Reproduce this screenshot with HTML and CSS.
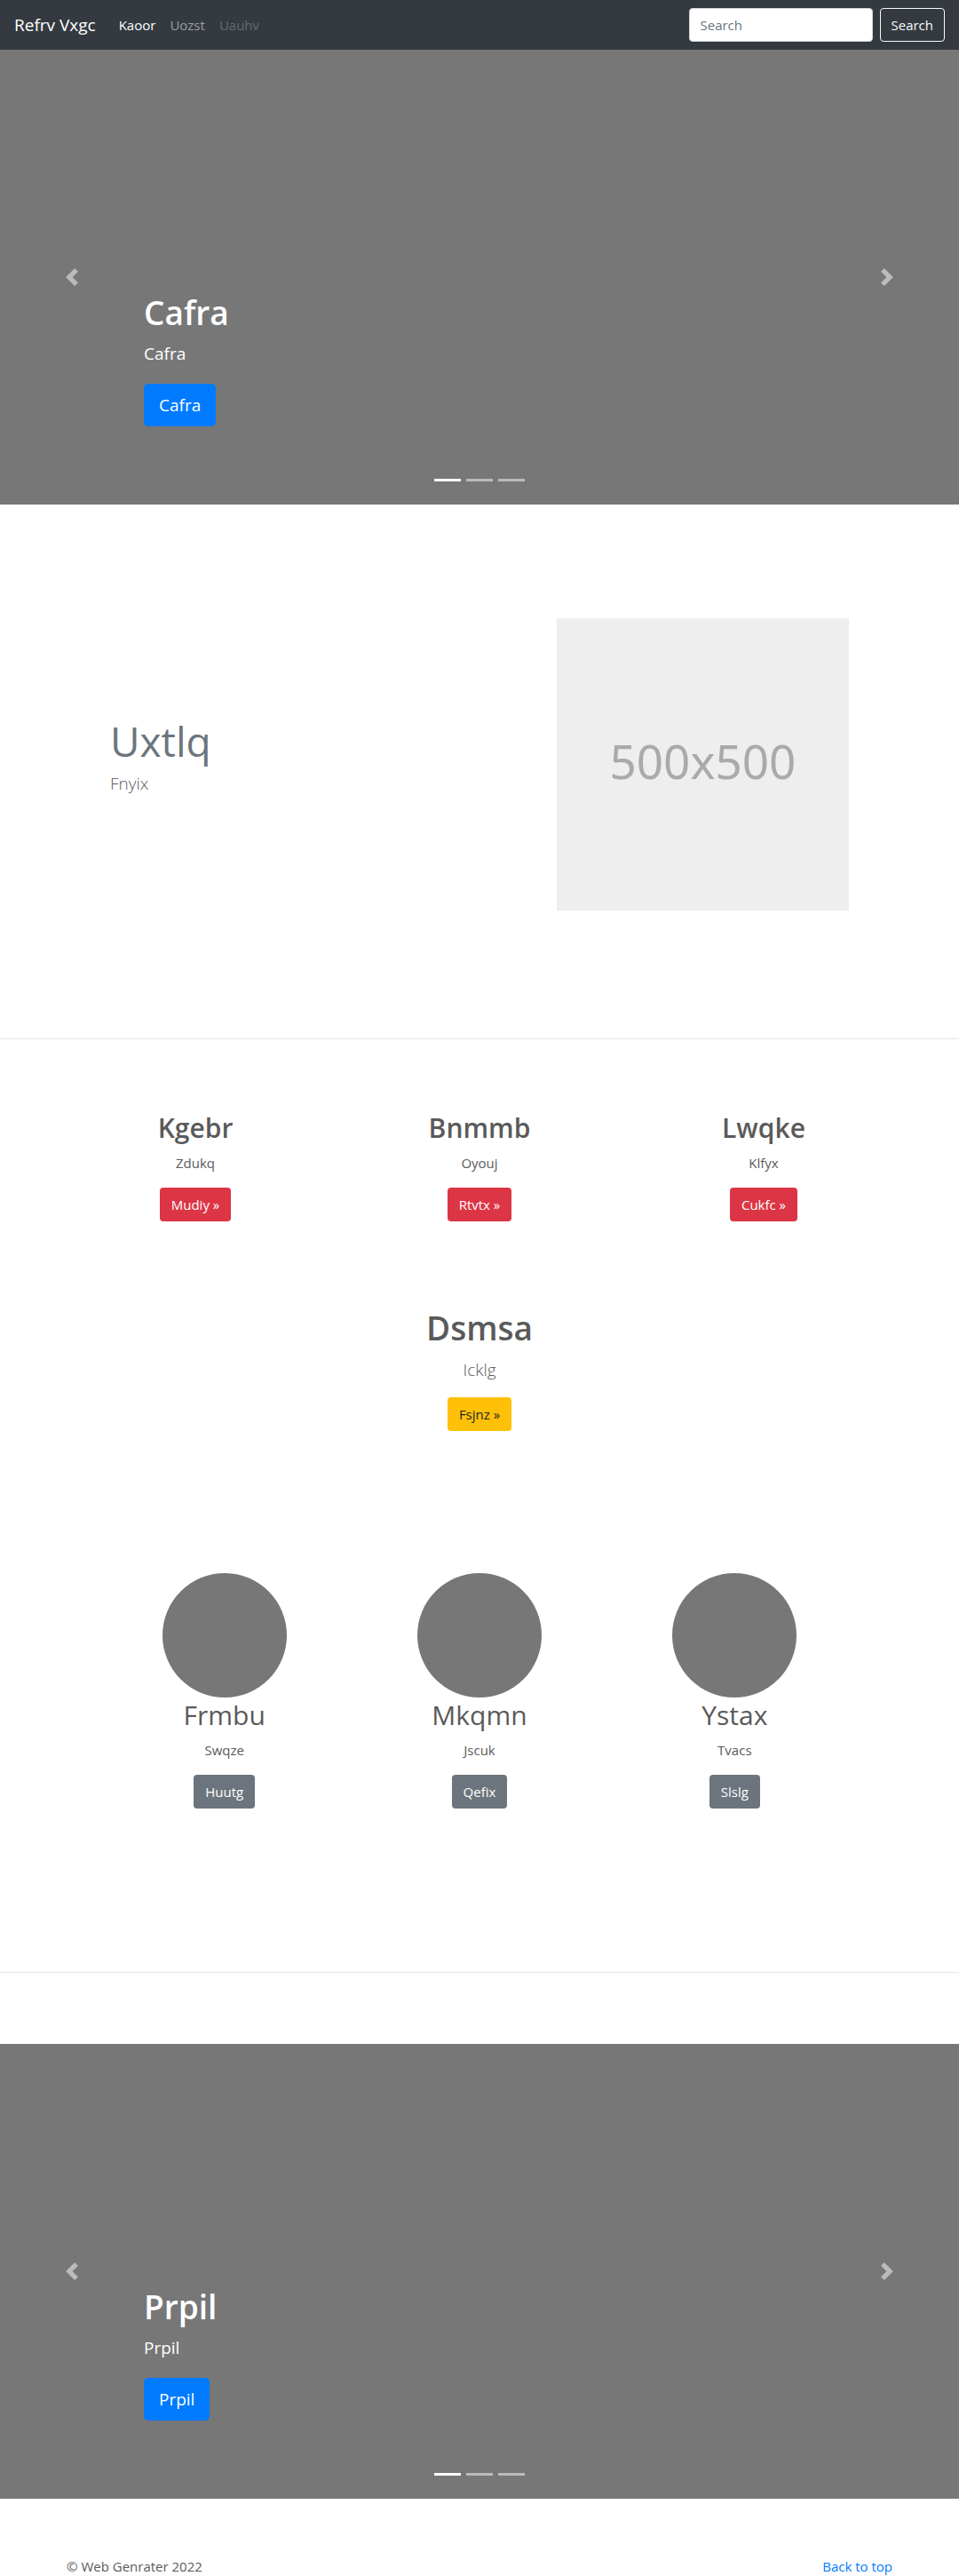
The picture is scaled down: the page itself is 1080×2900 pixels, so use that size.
FILE: index.html
```html
<!DOCTYPE html>
<html lang="en">
<head>
<meta charset="utf-8">
<meta name="viewport" content="width=device-width, initial-scale=1">
<title>Refrv Vxgc</title>
<link rel="stylesheet" href="styles.css">
</head>
<body id="top">
<header class="navbar">
  <a class="brand" href="#">Refrv Vxgc</a>
  <nav class="nav-links">
    <a class="nav-link active" href="#">Kaoor</a>
    <a class="nav-link" href="#">Uozst</a>
    <a class="nav-link disabled" href="#" aria-disabled="true">Uauhv</a>
  </nav>
  <form class="search">
    <input class="search-input" type="search" placeholder="Search" aria-label="Search">
    <button class="btn btn-outline" type="submit">Search</button>
  </form>
</header>
<main>
  <section class="carousel">
    <div class="caption">
      <h1 class="title">Cafra</h1>
      <p class="caption-text">Cafra</p>
      <a class="btn btn-large btn-primary" href="#">Cafra</a>
    </div>
    <button class="control control-prev" type="button" aria-label="Previous">
      <svg class="chevron" viewBox="0 0 8 8" fill="#fff"><path d="M5.25 0l-4 4 4 4 1.5-1.5L4.25 4l2.5-2.5L5.25 0z"/></svg>
    </button>
    <button class="control control-next" type="button" aria-label="Next">
      <svg class="chevron" viewBox="0 0 8 8" fill="#fff"><path d="M2.75 0l-1.5 1.5L3.75 4l-2.5 2.5L2.75 8l4-4-4-4z"/></svg>
    </button>
    <div class="indicators"><span class="dash current"></span><span class="dash"></span><span class="dash"></span></div>
  </section>

  <section class="featurette">
    <div class="featurette-text">
      <h2 class="featurette-title">Uxtlq</h2>
      <p class="lead">Fnyix</p>
    </div>
    <div class="placeholder">500x500</div>
  </section>

  <hr class="rule">

  <section class="columns">
    <div class="column">
      <h2 class="heading strong">Kgebr</h2>
      <p class="text">Zdukq</p>
      <a class="btn btn-danger" href="#">Mudiy »</a>
    </div>
    <div class="column">
      <h2 class="heading strong">Bnmmb</h2>
      <p class="text">Oyouj</p>
      <a class="btn btn-danger" href="#">Rtvtx »</a>
    </div>
    <div class="column">
      <h2 class="heading strong">Lwqke</h2>
      <p class="text">Klfyx</p>
      <a class="btn btn-danger" href="#">Cukfc »</a>
    </div>
  </section>

  <section class="callout">
    <h1 class="title">Dsmsa</h1>
    <p class="lead">Icklg</p>
    <a class="btn btn-warning" href="#">Fsjnz »</a>
  </section>

  <section class="columns profiles">
    <div class="column">
      <div class="avatar"></div>
      <h2 class="heading">Frmbu</h2>
      <p class="text">Swqze</p>
      <a class="btn btn-secondary" href="#">Huutg</a>
    </div>
    <div class="column">
      <div class="avatar"></div>
      <h2 class="heading">Mkqmn</h2>
      <p class="text">Jscuk</p>
      <a class="btn btn-secondary" href="#">Qefix</a>
    </div>
    <div class="column">
      <div class="avatar"></div>
      <h2 class="heading">Ystax</h2>
      <p class="text">Tvacs</p>
      <a class="btn btn-secondary" href="#">Slslg</a>
    </div>
  </section>

  <hr class="rule">

  <section class="carousel carousel-last">
    <div class="caption">
      <h1 class="title">Prpil</h1>
      <p class="caption-text">Prpil</p>
      <a class="btn btn-large btn-primary" href="#">Prpil</a>
    </div>
    <button class="control control-prev" type="button" aria-label="Previous">
      <svg class="chevron" viewBox="0 0 8 8" fill="#fff"><path d="M5.25 0l-4 4 4 4 1.5-1.5L4.25 4l2.5-2.5L5.25 0z"/></svg>
    </button>
    <button class="control control-next" type="button" aria-label="Next">
      <svg class="chevron" viewBox="0 0 8 8" fill="#fff"><path d="M2.75 0l-1.5 1.5L3.75 4l-2.5 2.5L2.75 8l4-4-4-4z"/></svg>
    </button>
    <div class="indicators"><span class="dash current"></span><span class="dash"></span><span class="dash"></span></div>
  </section>
</main>
<footer class="footer">
  <span>© Web Genrater 2022</span>
  <a class="footer-link" href="#top">Back to top</a>
</footer>
</body>
</html>
```
FILE: styles.css
```css
*, *::before, *::after { box-sizing: border-box; }

body {
  margin: 0;
  background: #fff;
  color: #5a5a5a;
  font-family: "Open Sans", "Noto Sans", sans-serif;
  font-size: 15px;
  line-height: 24px;
}

h1, h2, p { margin: 0; }
a { text-decoration: none; }

/* Navigation */
.navbar {
  display: flex;
  align-items: center;
  height: 56px;
  padding: 0 16px;
  background: #343a40;
}
.brand {
  margin-right: 26px;
  color: #fff;
  font-size: 19px;
}
.nav-links { display: flex; gap: 16px; }
.nav-link { color: rgba(255, 255, 255, .5); }
.nav-link.active { color: #fff; }
.nav-link.disabled { color: rgba(255, 255, 255, .25); }
.search {
  display: flex;
  gap: 8px;
  margin-left: auto;
}
.search-input {
  width: 207px;
  height: 38px;
  padding: 6px 12px;
  border: 1px solid #ced4da;
  border-radius: 4px;
  background: #fff;
  color: #495057;
  font: inherit;
}
.search-input::placeholder { color: #6c757d; opacity: 1; }

/* Buttons */
.btn {
  display: inline-block;
  padding: 6px 12px;
  border: 1px solid transparent;
  border-radius: 4px;
  color: #fff;
  font: inherit;
  text-align: center;
}
.btn-outline { border-color: #f8f9fa; background: transparent; color: #f8f9fa; }
.btn-primary { background: #007bff; }
.btn-danger { background: #dc3545; }
.btn-secondary { background: #6c757d; }
.btn-warning { background: #ffc107; color: #212529; }
.btn-large {
  padding: 8px 16px;
  border-radius: 5px;
  font-size: 19px;
  line-height: 30px;
}

/* Text */
.title {
  margin-bottom: 8px;
  font-size: 37px;
  font-weight: 600;
  line-height: 48px;
}
.heading {
  margin-bottom: 8px;
  font-size: 30px;
  font-weight: 400;
  line-height: 39px;
}
.heading.strong { font-weight: 600; }
.text { margin-bottom: 16px; }
.lead {
  font-size: 19px;
  font-weight: 300;
  line-height: 30px;
}

/* Carousel */
.carousel {
  position: relative;
  height: 512px;
  background: #777;
  color: #fff;
}
.carousel-last { margin-top: 80px; }
.caption {
  position: absolute;
  right: 15%;
  bottom: 88px;
  left: 15%;
}
.caption-text {
  margin-bottom: 20px;
  font-size: 19px;
  line-height: 28px;
}
.caption .btn { display: block; width: fit-content; }
.control {
  position: absolute;
  top: 0;
  bottom: 0;
  display: flex;
  align-items: center;
  justify-content: center;
  width: 15%;
  padding: 0;
  border: 0;
  background: none;
  opacity: .5;
}
.control-prev { left: 0; }
.control-next { right: 0; }
.chevron { width: 20px; height: 20px; }
.indicators {
  position: absolute;
  right: 0;
  bottom: 26px;
  left: 0;
  display: flex;
  justify-content: center;
  gap: 6px;
}
.dash { width: 30px; height: 3px; background: #fff; opacity: .5; }
.dash.current { opacity: 1; }

/* Featurette */
.featurette {
  display: grid;
  grid-template-columns: 7fr 5fr;
  align-items: center;
  max-width: 862px;
  margin: 128px auto 144px;
}
.featurette-text { padding: 0 15px 16px; }
.featurette-title {
  margin-bottom: 8px;
  color: #6c757d;
  font-size: 46px;
  font-weight: 400;
  line-height: 50px;
}
.placeholder {
  display: flex;
  align-items: center;
  justify-content: center;
  aspect-ratio: 1;
  margin: 0 15px;
  padding-bottom: 8px;
  background: #eee;
  color: #aaa;
  font-family: "Noto Sans", sans-serif;
  font-size: 53px;
}

.rule {
  margin: 0;
  border: 0;
  border-top: 1px solid #e5e5e5;
}

/* Columns */
.columns {
  display: grid;
  grid-template-columns: repeat(3, 1fr);
  max-width: 960px;
  margin: 80px auto 0;
  text-align: center;
}
.callout {
  margin-top: 96px;
  text-align: center;
}
.callout .lead { margin-bottom: 16px; }
.profiles {
  max-width: 862px;
  margin: 160px auto 184px;
}
.avatar {
  width: 140px;
  height: 140px;
  margin: 0 auto;
  border-radius: 50%;
  background: #777;
}

/* Footer */
.footer {
  display: flex;
  justify-content: space-between;
  max-width: 960px;
  margin: 64px auto 0;
  padding: 0 15px;
}
.footer-link { color: #007bff; }
```
